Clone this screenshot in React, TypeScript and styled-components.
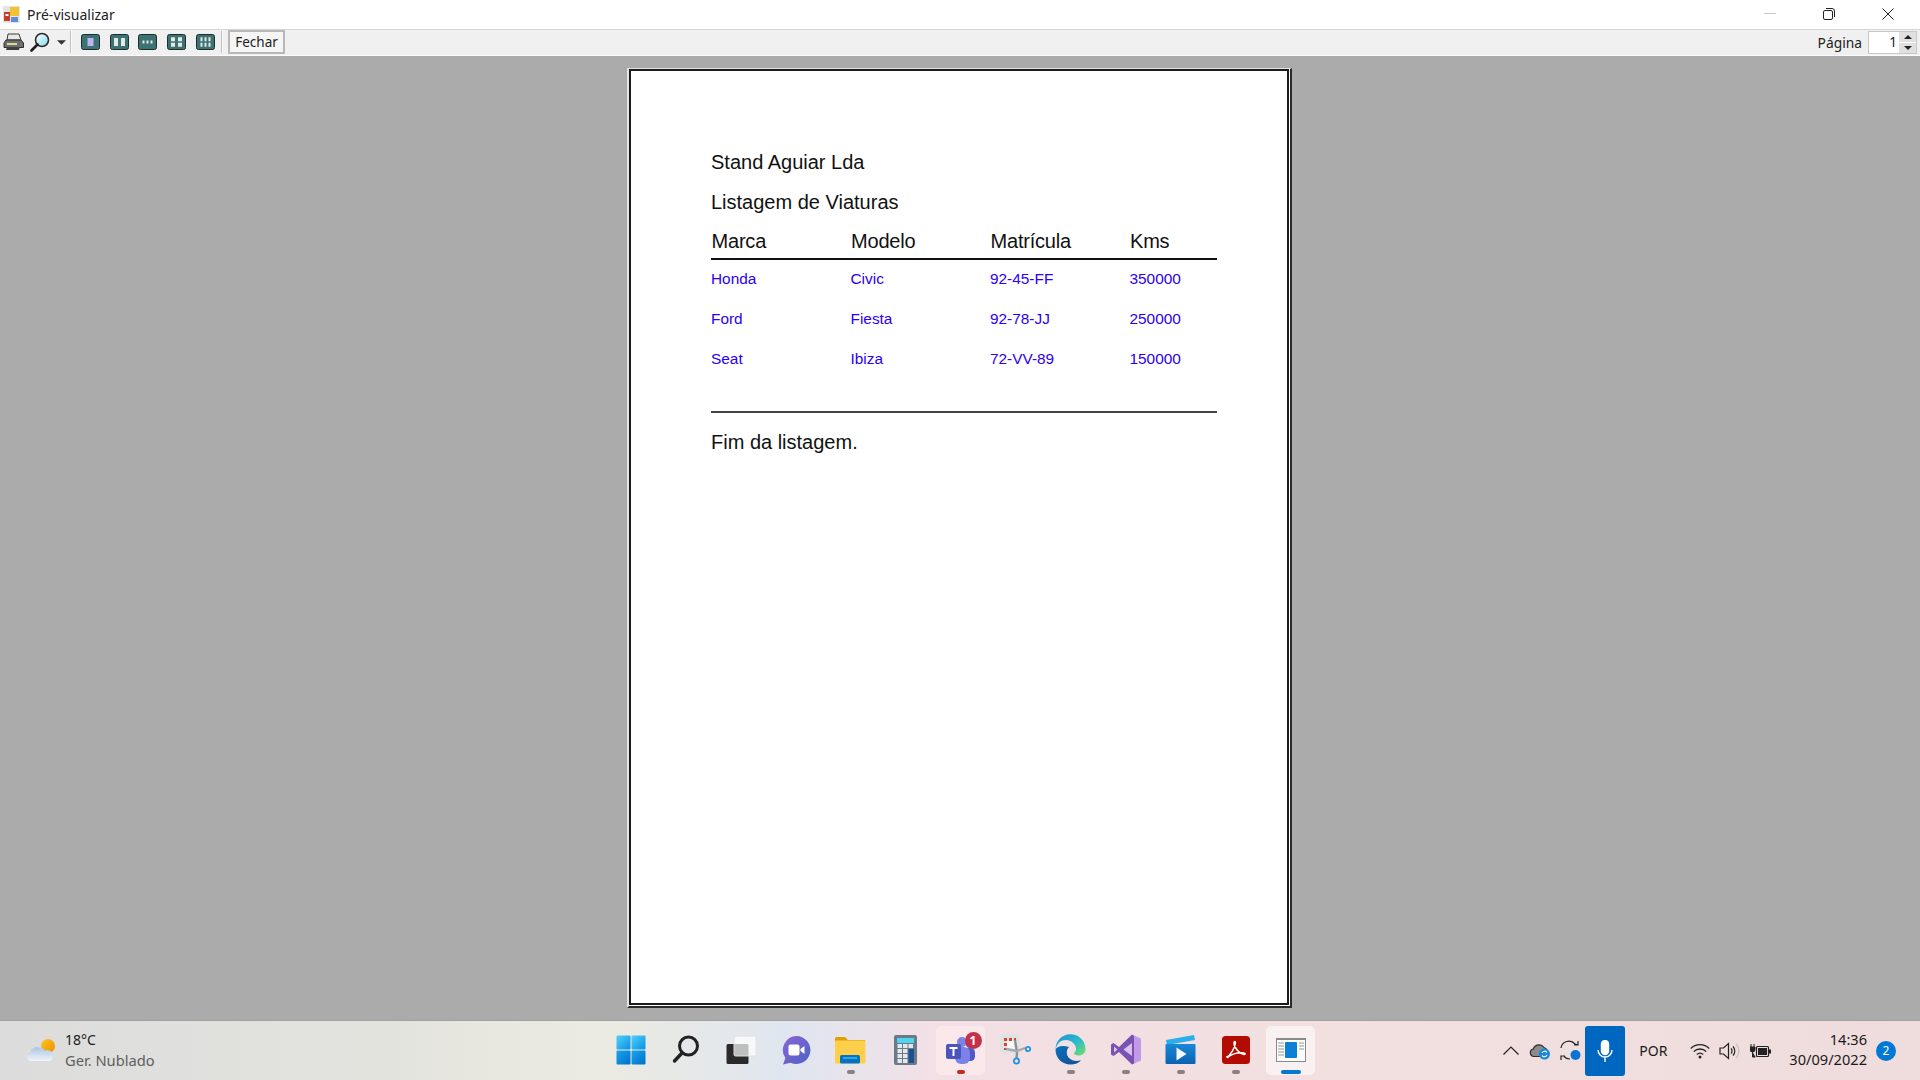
import React from "react";
import styled, { createGlobalStyle } from "styled-components";

const Global = createGlobalStyle`
  html, body { margin: 0; padding: 0; width: 1920px; height: 1080px; overflow: hidden; background: #ababab; }
  * { box-sizing: border-box; }
`;

const Screen = styled.div`
  width: 1920px;
  height: 1080px;
  display: flex;
  flex-direction: column;
  overflow: hidden;
  font-family: "Noto Sans", "Open Sans", sans-serif;
`;

const TitleBar = styled.div`
  height: 29px;
  flex: none;
  display: flex;
  align-items: center;
  background: #fff;
  padding-left: 3px;
`;
const TitleText = styled.span`
  margin-left: 7px;
  font-size: 14px;
  color: #222;
`;
const WindowControls = styled.div`
  margin-left: auto;
  margin-right: 3px;
  display: flex;
  height: 100%;
  padding-bottom: 1px;
`;
const WindowButton = styled.div`
  width: 59px;
  display: flex;
  align-items: center;
  justify-content: center;
`;

const Toolbar = styled.div`
  height: 27px;
  flex: none;
  display: flex;
  align-items: center;
  background: #f0f0f0;
  border-top: 1px solid #d6d6d6;
  border-bottom: 1px solid #fbfbfb;
  padding-bottom: 1px;
`;
const ToolSlot = styled.div<{ $w: number }>`
  width: ${(p) => p.$w}px;
  height: 100%;
  flex: none;
  display: flex;
  align-items: center;
  justify-content: center;
`;
const ToolSep = styled.div<{ $ml: number }>`
  width: 2px;
  height: 22px;
  flex: none;
  margin-left: ${(p) => p.$ml}px;
  background: #c2c2c2;
  border-right: 1px solid #fafafa;
`;
const CloseButton = styled.div`
  width: 57px;
  height: 24px;
  flex: none;
  margin-left: 5px;
  display: flex;
  align-items: center;
  justify-content: center;
  background: #f5f5f5;
  border: 2px solid #b8b8b8;
  font-size: 13.5px;
  color: #222;
`;
const PageLabel = styled.span`
  margin-left: auto;
  font-size: 13.8px;
  color: #222;
`;
const Spinner = styled.div`
  width: 49px;
  height: 23px;
  margin: 0 3px 0 6px;
  flex: none;
  display: flex;
  background: #fff;
  border: 1px solid #c8c8c8;
`;
const SpinValue = styled.div`
  flex: 1;
  text-align: right;
  padding-right: 2px;
  font-size: 13.5px;
  line-height: 20px;
  color: #222;
`;
const SpinArrows = styled.div`
  width: 17px;
  display: flex;
  flex-direction: column;
  gap: 1px;
  background: #fff;
`;
const SpinArrow = styled.div`
  flex: 1;
  display: flex;
  align-items: center;
  justify-content: center;
  background: #e0e0e0;
`;

const Viewer = styled.main`
  flex: 1;
  background: #ababab;
  display: flex;
  justify-content: center;
  align-items: flex-start;
  padding-top: 12px;
  padding-right: 1px;
`;
const Sheet = styled.div`
  width: 665px;
  height: 940px;
  flex: none;
  background: #fff;
  border-style: solid;
  border-width: 1px 2px 2px 2px;
  border-color: #e4e4e4 #2a2a2a #2a2a2a #e4e4e4;
  padding: 0 1px 1px 0;
`;
const SheetInner = styled.div`
  height: 100%;
  border: 2px solid #1c1c1c;
  padding: 71px 0 0 80px;
  font-family: "Liberation Sans", Arial, sans-serif;
`;
const Heading = styled.div`
  height: 40px;
  line-height: 40px;
  font-size: 20px;
  color: #111;
`;
const ReportTable = styled.div`
  width: 506px;
`;
const HeaderRow = styled.div`
  display: grid;
  grid-template-columns: 139.5px 139.5px 139.5px 1fr;
  height: 38px;
  line-height: 38px;
  font-size: 20px;
  letter-spacing: -0.2px;
  color: #111;
  border-bottom: 2px solid #111;
`;
const HeaderCell = styled.div`
  padding-left: 0.5px;
`;
const DataRow = styled.div`
  display: grid;
  grid-template-columns: 139.5px 139.5px 139.5px 1fr;
  height: 36px;
  line-height: 37px;
  margin-bottom: 4px;
  font-size: 15.4px;
  color: #2b00f5;
`;
const EndRule = styled.div`
  width: 506px;
  height: 2px;
  margin-top: 35px;
  background: #444;
`;
const Footer = styled(Heading)`
  margin-top: 9px;
`;

const Taskbar = styled.footer`
  height: 60px;
  flex: none;
  display: grid;
  grid-template-columns: 603px 716px 1fr;
  background: linear-gradient(90deg, #dcdcdc 0%, #e3e3de 20%, #ecebe1 31%, #e0e6f0 41%, #f3e0e5 49%, #f2dfdf 70%, #efdcdc 100%);
  border-top: 1px solid #a0a0a0;
`;
const Weather = styled.div`
  display: flex;
  align-items: center;
  padding-left: 26px;
`;
const WeatherText = styled.div`
  margin-left: 9px;
  padding-bottom: 1px;
  font-size: 14.7px;
  line-height: 20px;
  color: #5e5e5e;
`;
const WeatherTemp = styled.div`
  color: #1b1b1b;
  font-size: 14px;
`;
const Apps = styled.div`
  display: flex;
`;
const AppSlot = styled.div<{ $tint?: string }>`
  position: relative;
  width: 55px;
  height: 59px;
  display: flex;
  align-items: center;
  justify-content: center;
  padding-bottom: 2px;
  &::before {
    content: "";
    position: absolute;
    left: 3px;
    right: 3px;
    top: 5px;
    bottom: 5px;
    border-radius: 5px;
    background: ${(p) => p.$tint ?? "transparent"};
  }
  & > svg {
    position: relative;
  }
`;
const RunDot = styled.span<{ $color: string; $w: number }>`
  position: absolute;
  left: 50%;
  bottom: 6px;
  width: ${(p) => p.$w}px;
  height: 4px;
  border-radius: 2px;
  transform: translateX(-50%);
  background: ${(p) => p.$color};
`;
const Tray = styled.div`
  display: flex;
  justify-content: flex-end;
  align-items: center;
  padding-right: 24px;
`;
const TrayIcon = styled.div<{ $w: number }>`
  width: ${(p) => p.$w}px;
  flex: none;
  display: flex;
  align-items: center;
  justify-content: center;
`;
const MicTile = styled.div`
  width: 40px;
  height: 50px;
  flex: none;
  display: flex;
  align-items: center;
  justify-content: center;
  background: #0067c0;
  border-radius: 3px;
`;
const Lang = styled.div`
  width: 56px;
  flex: none;
  margin-right: 4px;
  text-align: center;
  font-size: 14px;
  color: #1b1b1b;
`;
const Clock = styled.div`
  margin-left: 13px;
  padding-bottom: 3px;
  text-align: right;
  font-size: 14.6px;
  line-height: 20px;
  color: #1b1b1b;
`;
const NotifyBadge = styled.div`
  width: 20px;
  height: 20px;
  margin-left: 9px;
  flex: none;
  border-radius: 50%;
  background: #0078d4;
  color: #fff;
  font-size: 12px;
  line-height: 20px;
  text-align: center;
`;
const BadgeWrap = styled.div`
  position: relative;
  display: flex;
`;
const TeamsBadge = styled.span`
  position: absolute;
  right: -6px;
  top: -3px;
  width: 17px;
  height: 17px;
  border-radius: 50%;
  background: #c4314b;
  color: #fff;
  font-size: 12px;
  font-weight: 700;
  line-height: 17px;
  text-align: center;
`;

const AppLogo = () => (
  <svg width="17" height="17" viewBox="0 0 17 17">
    <rect x="0" y="0" width="17" height="17" fill="#e4e4e4" />
    <rect x="1" y="6" width="6" height="9" fill="#c43a2c" />
    <rect x="2.5" y="8" width="3" height="2" fill="#fff" />
    <rect x="7" y="1" width="9" height="9" fill="#f2c230" />
    <rect x="8" y="11" width="7" height="5" fill="#5d8fd8" />
  </svg>
);
const Restore = () => (
  <svg width="12" height="12" viewBox="0 0 12 12" fill="none" stroke="#222" strokeWidth="1">
    <rect x="0.5" y="2.5" width="9" height="9" rx="1.5" />
    <path d="M3 .5h6a2.5 2.5 0 0 1 2.5 2.5v6" />
  </svg>
);
const Minimize = () => (
  <svg width="12" height="2" viewBox="0 0 12 2"><rect width="12" height="1" fill="#c8c8c8" /></svg>
);
const Close = () => (
  <svg width="12" height="12" viewBox="0 0 12 12" stroke="#222" strokeWidth="1"><path d="M.5.5l11 11M11.5.5l-11 11" /></svg>
);
const Printer = () => (
  <svg width="21" height="18" viewBox="0 0 21 18">
    <path d="M5 1h11l2 6H4z" fill="#e8e8e8" stroke="#3c3c3c" />
    <path d="M3 7h15l2.5 3v4.5H1V10z" fill="#6e6e6e" stroke="#2e2e2e" />
    <rect x="4" y="10" width="10" height="2" fill="#dcdc90" />
    <path d="M4 14h13l-1 3H3z" fill="#3f3f3f" />
  </svg>
);
const Magnifier = () => (
  <svg width="20" height="20" viewBox="0 0 20 20">
    <defs>
      <linearGradient id="lens" x1="0" y1="0" x2="1" y2="1">
        <stop offset="0" stopColor="#ffffff" />
        <stop offset="1" stopColor="#7fdcea" />
      </linearGradient>
    </defs>
    <circle cx="12" cy="8" r="6.500" fill="url(#lens)" stroke="#2c2c2c" strokeWidth="1.600" />
    <path d="M7.500 12.500L1.500 18.500" stroke="#1f1f1f" strokeWidth="2.600" strokeLinecap="round" />
  </svg>
);
const Caret = ({ flip, color = "#333", w = 9, h = 5 }: { flip?: boolean; color?: string; w?: number; h?: number }) => (
  <svg width={w} height={h} viewBox="0 0 8 4">
    <path d={flip ? "M0 4L4 0l4 4z" : "M0 0h8L4 4z"} fill={color} />
  </svg>
);
const LayoutIcon = ({ cols, rows }: { cols: number; rows: number }) => {
  const cells: React.ReactElement[] = [];
  const single = cols === 1;
  const cw = single ? 6 : cols === 2 ? 4 : 2;
  const ch = rows === 1 ? (cols === 3 ? 3 : 8) : 4;
  const gap = cols === 3 ? 2 : 3;
  const totalW = cols * cw + (cols - 1) * gap;
  const totalH = rows * ch + (rows - 1) * 1.5;
  for (let r = 0; r < rows; r++) {
    for (let c = 0; c < cols; c++) {
      cells.push(
        <rect
          key={`${r}-${c}`}
          x={(19 - totalW) / 2 + c * (cw + gap)}
          y={(16 - totalH) / 2 + r * (ch + 1.5)}
          width={cw}
          height={ch}
          fill={single ? "#b9b6f0" : "#e4e8e8"}
        />
      );
    }
  }
  return (
    <svg width="19" height="16" viewBox="0 0 19 16">
      <rect x="0.5" y="0.5" width="18" height="15" rx="2" fill="#3c7272" stroke="#1f2c2c" />
      {cells}
    </svg>
  );
};
const WeatherIcon = () => (
  <svg width="30" height="24" viewBox="0 0 30 24">
    <defs>
      <linearGradient id="sun" x1="0" y1="0" x2="1" y2="1"><stop offset="0" stopColor="#ffc81e" /><stop offset="1" stopColor="#ee8c00" /></linearGradient>
      <linearGradient id="cl" x1="0" y1="0" x2="0" y2="1"><stop offset="0" stopColor="#a9c6e6" /><stop offset="1" stopColor="#f2f4f7" /></linearGradient>
    </defs>
    <circle cx="22" cy="7" r="7" fill="url(#sun)" />
    <path d="M5 22a4.500 4.500 0 0 1-1-8.800A7 7 0 0 1 13 8.500a6.500 6.500 0 0 1 6 3.200 5.500 5.500 0 0 1 8 5A5 5 0 0 1 23 22z" fill="url(#cl)" />
  </svg>
);
const WinLogo = () => (
  <svg width="30" height="30" viewBox="0 0 30 30">
    <defs>
      <linearGradient id="w1" x1="0" y1="0" x2="1" y2="1"><stop offset="0" stopColor="#4fd2fb" /><stop offset="1" stopColor="#0a8fe2" /></linearGradient>
      <linearGradient id="w2" x1="0" y1="0" x2="1" y2="1"><stop offset="0" stopColor="#1aa5ec" /><stop offset="1" stopColor="#0070cc" /></linearGradient>
    </defs>
    <rect x="0.500" y="0.500" width="14" height="14" rx="1" fill="url(#w1)" />
    <rect x="15.500" y="0.500" width="14" height="14" rx="1" fill="url(#w1)" />
    <rect x="0.500" y="15.500" width="14" height="14" rx="1" fill="url(#w2)" />
    <rect x="15.500" y="15.500" width="14" height="14" rx="1" fill="url(#w2)" />
  </svg>
);
const SearchIcon = () => (
  <svg width="28" height="29" viewBox="0 0 28 29" fill="none" stroke="#222">
    <circle cx="16.500" cy="11" r="9" strokeWidth="3" />
    <path d="M10 18l-7.500 8" strokeWidth="3.400" strokeLinecap="round" />
  </svg>
);
const TaskView = () => (
  <svg width="30" height="30" viewBox="0 0 30 30">
    <rect x="0.500" y="9" width="22" height="20" rx="1.500" fill="#2a2a2a" />
    <rect x="8" y="1" width="22" height="20" rx="1.500" fill="#fff" fillOpacity="0.7" stroke="#dedede" />
  </svg>
);
const ChatIcon = () => (
  <svg width="30" height="30" viewBox="0 0 30 30">
    <defs><linearGradient id="ch" x1="0" y1="0" x2="1" y2="1"><stop offset="0" stopColor="#8d64d6" /><stop offset="1" stopColor="#4a63c4" /></linearGradient></defs>
    <path d="M15.500 1a14 14 0 1 1-6 26.700L2 29.500l2.400-6.500A14 14 0 0 1 15.500 1z" fill="url(#ch)" />
    <rect x="7.500" y="9.500" width="11" height="11" rx="2" fill="#fff" />
    <path d="M19.500 14l4-3v8l-4-3z" fill="#fff" />
  </svg>
);
const FolderIcon = () => (
  <svg width="31" height="28" viewBox="0 0 31 28">
    <path d="M0 2.500A1.500 1.500 0 0 1 1.500 1H10l3 3h17v6H0z" fill="#e0a100" />
    <rect x="0" y="4.500" width="30.500" height="23" rx="1" fill="#fdcf4b" />
    <rect x="5" y="19" width="20" height="8.500" rx="1.500" fill="#0673c2" />
    <rect x="8" y="21" width="14" height="2" fill="#29a7e8" />
  </svg>
);
const CalcIcon = () => {
  const keys: React.ReactElement[] = [];
  for (let r = 0; r < 4; r++) {
    for (let c = 0; c < 3; c++) {
      const dark = c === 2 && r > 0;
      if (!dark) keys.push(<rect key={`${r}${c}`} x={3.500 + c * 5.500} y={9 + r * 5} width="4.500" height="4" fill="#e5e8ea" />);
    }
  }
  return (
    <svg width="24" height="30" viewBox="0 0 24 30">
      <rect x="0" y="0" width="23" height="30" rx="2" fill="#6b7a86" />
      <rect x="3" y="3" width="17" height="5" fill="#4fd5f0" />
      {keys}
      <rect x="14.500" y="14" width="5.500" height="14" fill="#1c4f8f" />
    </svg>
  );
};
const TeamsIcon = () => (
  <BadgeWrap>
    <svg width="30" height="30" viewBox="0 0 30 30">
      <circle cx="24" cy="9" r="4" fill="#5059c9" />
      <rect x="19" y="13" width="10" height="13" rx="4.500" fill="#5059c9" />
      <circle cx="16" cy="7" r="5" fill="#7b83eb" />
      <rect x="9" y="12" width="15" height="17" rx="6" fill="#7b83eb" />
      <rect x="0" y="9" width="15" height="15" rx="2" fill="#4b53bc" />
      <path d="M3.500 12h8v2H8.500v7h-2v-7h-3z" fill="#fff" />
    </svg>
    <TeamsBadge>1</TeamsBadge>
  </BadgeWrap>
);
const SnipIcon = () => (
  <svg width="31" height="31" viewBox="0 0 31 31">
    <rect x="0.500" y="0.500" width="19" height="19" rx="2" fill="#dde2e3" />
    <rect x="7" y="7" width="10" height="10" fill="#f6f7f7" />
    <path d="M4 4h3v3H4zM9 4h3v3H9zM14 4h2v3h-2zM4 9h3v3H4zM4 14h3v2H4z" fill="#d8452d" />
    <path d="M15 6l2 13-0.500 5" stroke="#8a8f92" strokeWidth="2.400" fill="none" />
    <path d="M6 15l11 2 8-3" stroke="#a5a9ac" strokeWidth="2.400" fill="none" />
    <circle cx="16.500" cy="27" r="2.600" fill="none" stroke="#2293dd" strokeWidth="1.800" />
    <circle cx="28" cy="15" r="2.200" fill="none" stroke="#2293dd" strokeWidth="1.800" />
  </svg>
);
const EdgeIcon = () => (
  <svg width="31" height="31" viewBox="0 0 31 31">
    <defs>
      <linearGradient id="e1" x1="0" y1="0" x2="1" y2="1"><stop offset="0" stopColor="#0b6fc0" /><stop offset="1" stopColor="#11508f" /></linearGradient>
      <linearGradient id="e2" x1="0" y1="0" x2="1" y2="1"><stop offset="0" stopColor="#1792dc" /><stop offset="0.550" stopColor="#2fbcc8" /><stop offset="1" stopColor="#74e25f" /></linearGradient>
    </defs>
    <path d="M.5 15.500A15 15 0 0 1 30.500 15c0 4-3 6.500-7 6.500-3 0-4.500-1-4.500-2.500 1-1 2-2 2-4 0-5-5-9-10-9-5 0-9 3-10.500 9.500z" fill="url(#e2)" />
    <path d="M.5 15.500C.5 24 7 30.500 15.500 30.500c4.500 0 8.500-1.500 10.500-4.500-4 2-9 1-12-2-3-3-3-8 0-11C8 11 2 12 .5 15.500z" fill="url(#e1)" />
  </svg>
);
const VsIcon = () => (
  <svg width="30" height="31" viewBox="0 0 30 31">
    <path d="M21 0.500l9 4v22l-9 4z" fill="#c29ae8" />
    <path d="M21 0.500L8 13 2.500 9 0 10.500v10L2.500 22 8 18l13 12.500 2-1V2z" fill="#7a52b3" />
    <path d="M21 9v13l-8.500-6.500z" fill="#d9c2f0" />
    <path d="M3 12.500v6l3.500-3z" fill="#d9c2f0" />
  </svg>
);
const MovieIcon = () => (
  <svg width="31" height="29" viewBox="0 0 31 29">
    <defs><linearGradient id="mv" x1="0" y1="0" x2="0" y2="1"><stop offset="0" stopColor="#1a88d8" /><stop offset="1" stopColor="#0a62b0" /></linearGradient></defs>
    <path d="M1 5L29 0l1 5L2 10z" fill="#29b0ea" />
    <rect x="0.500" y="9" width="30" height="20" rx="1" fill="url(#mv)" />
    <path d="M11.500 12.500l10 6.500-10 6.500z" fill="#f4f8fb" />
  </svg>
);
const AcrobatIcon = () => (
  <svg width="28" height="28" viewBox="0 0 28 28">
    <rect width="28" height="28" rx="3.500" fill="#b30b00" />
    <path d="M5 21c3-1.500 8-9 8.500-14 0-2-1.500-2-1.500 0 0 5 6 11 10 11.500 1.500 0 1.500-1.500 0-1.500-5-.5-12 1-16.500 4.500z" fill="none" stroke="#fff" strokeWidth="1.500" />
  </svg>
);
const PreviewIcon = () => (
  <svg width="30" height="24" viewBox="0 0 30 24">
    <rect x="0.500" y="0.500" width="29" height="23" fill="#fbfbfb" stroke="#8a8a8a" />
    <rect x="0" y="0" width="30" height="2" fill="#8a8a8a" />
    <path d="M2 5h6M2 8h6M2 11h6M2 14h6M2 17h6M23 5h5M23 8h5M23 11h5" stroke="#9a9a9a" strokeWidth="1.200" />
    <rect x="9" y="4" width="12" height="16" rx="1" fill="#0d7fd6" />
  </svg>
);
const Chevron = () => (
  <svg width="16" height="9" viewBox="0 0 16 9" fill="none" stroke="#222" strokeWidth="1.200"><path d="M.5 8.500L8 1l7.500 7.500" /></svg>
);
const CloudSync = () => (
  <svg width="22" height="18" viewBox="0 0 22 18">
    <path d="M5 14.500a3.800 3.800 0 0 1-.7-7.500A6 6 0 0 1 15 5.500a4 4 0 0 1 3 3V14.500z" fill="#8b8b8b" stroke="#2c2c2c" strokeWidth="1.200" />
    <circle cx="15.500" cy="12" r="5.500" fill="#1a86d9" />
    <path d="M13 11a2.800 2.800 0 0 1 5-.5M18 13a2.800 2.800 0 0 1-5 .5" stroke="#fff" strokeWidth="1.100" fill="none" />
  </svg>
);
const SyncIcon = () => (
  <svg width="21" height="21" viewBox="0 0 21 21" fill="none" stroke="#222" strokeWidth="1.200">
    <path d="M1 8a8 8 0 0 1 14-4l3 1M18 1v4h-4" />
    <path d="M10 19a8 8 0 0 1-6-2.500M1 20v-4h4" />
    <circle cx="15.500" cy="15" r="5" fill="#0a74d6" stroke="none" />
  </svg>
);
const MicIcon = () => (
  <svg width="16" height="22" viewBox="0 0 16 22" fill="none" stroke="#fff" strokeWidth="1.400">
    <rect x="4.500" y="0.500" width="7" height="14" rx="3.500" fill="#fff" />
    <path d="M1 10a7 7 0 0 0 14 0M8 17.500V22" />
  </svg>
);
const WifiIcon = () => (
  <svg width="20" height="16" viewBox="0 0 20 16" fill="none" stroke="#222" strokeWidth="1.300">
    <path d="M.8 5.500a13 13 0 0 1 18.400 0M3.800 8.500a9 9 0 0 1 12.400 0M6.800 11.500a4.800 4.800 0 0 1 6.400 0" />
    <circle cx="10" cy="14" r="1.500" fill="#222" stroke="none" />
  </svg>
);
const VolumeIcon = () => (
  <svg width="21" height="18" viewBox="0 0 21 18" fill="none" stroke="#222" strokeWidth="1.200">
    <path d="M1 6h3.500L9.500 1.500v15L4.500 12H1z" />
    <path d="M12 6.500a3.500 3.500 0 0 1 0 5M14 4.500a6.500 6.500 0 0 1 0 9" />
    <path d="M17 2a10 10 0 0 1 0 14" stroke="#c9bdbd" />
  </svg>
);
const BatteryIcon = () => (
  <svg width="21" height="16" viewBox="0 0 21 16">
    <path d="M1 1v3M4 1v3M0 4h5v2.500a2.500 2.500 0 0 1-5 0zM2.500 9v5h3" stroke="#222" strokeWidth="1" fill="#222" />
    <rect x="6.500" y="3.500" width="12" height="10" rx="1" fill="none" stroke="#222" strokeWidth="1.200" />
    <rect x="8" y="5" width="9" height="7" fill="#222" />
    <rect x="19" y="6.500" width="2" height="4" fill="#222" />
  </svg>
);

const cars = [
  ["Honda", "Civic", "92-45-FF", "350000"],
  ["Ford", "Fiesta", "92-78-JJ", "250000"],
  ["Seat", "Ibiza", "72-VV-89", "150000"],
];
const columns = ["Marca", "Modelo", "Matrícula", "Kms"];
const layouts = [
  { cols: 1, rows: 1 },
  { cols: 2, rows: 1 },
  { cols: 3, rows: 1 },
  { cols: 2, rows: 2 },
  { cols: 3, rows: 2 },
];
const apps: { icon: React.ReactNode; dot?: string; dotW?: number; tint?: string }[] = [
  { icon: <WinLogo /> },
  { icon: <SearchIcon /> },
  { icon: <TaskView /> },
  { icon: <ChatIcon /> },
  { icon: <FolderIcon />, dot: "#8a8080", dotW: 8 },
  { icon: <CalcIcon /> },
  { icon: <TeamsIcon />, dot: "#c42b1c", dotW: 8, tint: "#fae8ea" },
  { icon: <SnipIcon /> },
  { icon: <EdgeIcon />, dot: "#8a8080", dotW: 8 },
  { icon: <VsIcon />, dot: "#8a8080", dotW: 8 },
  { icon: <MovieIcon />, dot: "#8a8080", dotW: 8 },
  { icon: <AcrobatIcon />, dot: "#8a8080", dotW: 8 },
  { icon: <PreviewIcon />, dot: "#0078d4", dotW: 20, tint: "#f9f1f1" },
];

export default function App() {
  return (
    <Screen>
      <Global />
      <TitleBar>
        <AppLogo />
        <TitleText>Pré-visualizar</TitleText>
        <WindowControls>
          <WindowButton><Minimize /></WindowButton>
          <WindowButton><Restore /></WindowButton>
          <WindowButton><Close /></WindowButton>
        </WindowControls>
      </TitleBar>
      <Toolbar>
        <ToolSlot $w={27}><Printer /></ToolSlot>
        <ToolSlot $w={26}><Magnifier /></ToolSlot>
        <ToolSlot $w={16}><Caret /></ToolSlot>
        <ToolSep $ml={1} />
        <ToolSlot $w={4} />
        {layouts.map((l, i) => (
          <ToolSlot $w={28.8} key={i}><LayoutIcon cols={l.cols} rows={l.rows} /></ToolSlot>
        ))}
        <ToolSep $ml={1} />
        <CloseButton>Fechar</CloseButton>
        <PageLabel>Página</PageLabel>
        <Spinner>
          <SpinValue>1</SpinValue>
          <SpinArrows>
            <SpinArrow><Caret flip w={8} h={4} color="#222" /></SpinArrow>
            <SpinArrow><Caret w={8} h={4} color="#222" /></SpinArrow>
          </SpinArrows>
        </Spinner>
      </Toolbar>
      <Viewer>
        <Sheet>
          <SheetInner>
            <Heading>Stand Aguiar Lda</Heading>
            <Heading>Listagem de Viaturas</Heading>
            <ReportTable>
              <HeaderRow>
                {columns.map((c) => <HeaderCell key={c}>{c}</HeaderCell>)}
              </HeaderRow>
              {cars.map((row) => (
                <DataRow key={row[0]}>
                  {row.map((v) => <div key={v}>{v}</div>)}
                </DataRow>
              ))}
            </ReportTable>
            <EndRule />
            <Footer>Fim da listagem.</Footer>
          </SheetInner>
        </Sheet>
      </Viewer>
      <Taskbar>
        <Weather>
          <WeatherIcon />
          <WeatherText>
            <WeatherTemp>18°C</WeatherTemp>
            Ger. Nublado
          </WeatherText>
        </Weather>
        <Apps>
          {apps.map((a, i) => (
            <AppSlot key={i} $tint={a.tint}>
              {a.icon}
              {a.dot && <RunDot $color={a.dot} $w={a.dotW ?? 8} />}
            </AppSlot>
          ))}
        </Apps>
        <Tray>
          <TrayIcon $w={28}><Chevron /></TrayIcon>
          <TrayIcon $w={30}><CloudSync /></TrayIcon>
          <TrayIcon $w={30}><SyncIcon /></TrayIcon>
          <MicTile><MicIcon /></MicTile>
          <Lang>POR</Lang>
          <TrayIcon $w={30}><WifiIcon /></TrayIcon>
          <TrayIcon $w={29}><VolumeIcon /></TrayIcon>
          <TrayIcon $w={32}><BatteryIcon /></TrayIcon>
          <Clock>
            <div>14:36</div>
            <div>30/09/2022</div>
          </Clock>
          <NotifyBadge>2</NotifyBadge>
        </Tray>
      </Taskbar>
    </Screen>
  );
}
